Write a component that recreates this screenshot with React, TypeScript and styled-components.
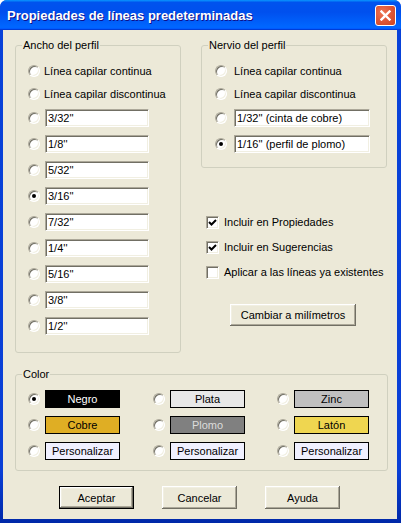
import React from 'react';
import styled, { createGlobalStyle } from 'styled-components';

const Global = createGlobalStyle`
  html, body { margin: 0; padding: 0; background: #ffffff; }
  body { font-family: "Liberation Sans", Arial, sans-serif; font-size: 11px; color: #000; }
`;

const Window = styled.div`
  width: 401px;
  height: 523px;
  box-sizing: border-box;
  display: flex;
  flex-direction: column;
  background: linear-gradient(to bottom, #0842d9 0%, #0a3fd6 90%, #0028a8 100%);
  border-radius: 7px 7px 0 0;
  overflow: hidden;
`;

const TitleBar = styled.div`
  height: 30px;
  flex: none;
  display: flex;
  align-items: center;
  justify-content: space-between;
  padding: 1px 5px 0 7px;
  box-sizing: border-box;
  background: linear-gradient(180deg, #0997ff, #0053ee 8%, #0050ee 40%, #0066ff 88%, #0066ff 93%, #005bff 95%, #003dd7 96%, #003dd7);
`;

const Title = styled.span`
  color: #fff;
  font: bold 13px "Liberation Sans", Arial, sans-serif;
  text-shadow: 1px 1px 0 #0f1089;
  white-space: nowrap;
`;

const CloseButton = styled.div`
  width: 21px;
  height: 21px;
  box-sizing: border-box;
  border: 1px solid #ffffff;
  border-radius: 3px;
  background: radial-gradient(circle at 35% 35%, #ee7755 0%, #e0593a 45%, #cc4420 100%);
  display: flex;
  align-items: center;
  justify-content: center;
`;

const Body = styled.div`
  flex: 1;
  margin: 0 4px 4px 3px;
  background: #ece9d8;
  padding: 15px 0 0 12px;
  display: flex;
  flex-direction: column;
`;

const TopSection = styled.div`
  display: flex;
  gap: 20px;
`;

const Group = styled.div<{ $w: number; $h: number; $pl: number; $pt: number }>`
  position: relative;
  box-sizing: border-box;
  width: ${p => p.$w}px;
  height: ${p => p.$h}px;
  border: 1px solid #d0d0bf;
  border-radius: 3px;
  padding: ${p => p.$pt}px 0 0 ${p => p.$pl}px;
`;

const Legend = styled.span`
  position: absolute;
  top: -7px;
  left: 6px;
  padding: 0 1px;
  line-height: 13px;
  background: #ece9d8;
`;

const OptionList = styled.div`
  display: flex;
  flex-direction: column;
`;

const OptionRow = styled.div<{ $mt: number; $gap: number }>`
  display: flex;
  align-items: center;
  height: 18px;
  margin-top: ${p => p.$mt}px;
  gap: ${p => p.$gap}px;
`;

const Radio = styled.span<{ $on?: boolean }>`
  position: relative;
  flex: none;
  width: 12px;
  height: 12px;
  box-sizing: border-box;
  border-radius: 50%;
  background: #fff;
  border: 1px solid;
  border-color: #aca899 #ffffff #ffffff #aca899;
  box-shadow: inset 1px 1px 0 #716f64, inset -1px -1px 0 #f1efe2;
  &::after {
    content: '';
    display: ${p => (p.$on ? 'block' : 'none')};
    position: absolute;
    left: 3px;
    top: 3px;
    width: 4px;
    height: 4px;
    border-radius: 50%;
    background: #000;
  }
`;

const TextBox = styled.div<{ $w: number }>`
  width: ${p => p.$w}px;
  height: 18px;
  box-sizing: border-box;
  background: #fff;
  border: 1px solid;
  border-color: #aca899 #ffffff #ffffff #aca899;
  box-shadow: inset 1px 1px 0 #716f64, inset -1px -1px 0 #f1efe2;
  padding: 0 2px;
  line-height: 16px;
  white-space: nowrap;
`;

const Label = styled.span`
  white-space: nowrap;
`;

const RightColumn = styled.div`
  width: 186px;
  display: flex;
  flex-direction: column;
`;

const CheckList = styled.div`
  display: flex;
  flex-direction: column;
  gap: 9px;
  margin: 46px 0 0 5px;
`;

const CheckRow = styled.div`
  display: flex;
  align-items: center;
  gap: 5px;
  height: 16px;
`;

const CheckBox = styled.span`
  flex: none;
  width: 13px;
  height: 13px;
  box-sizing: border-box;
  background: #fff;
  border: 1px solid;
  border-color: #aca899 #ffffff #ffffff #aca899;
  box-shadow: inset 1px 1px 0 #716f64, inset -1px -1px 0 #f1efe2;
  display: flex;
  align-items: center;
  justify-content: center;
`;

const Button = styled.button<{ $w?: number; $default?: boolean }>`
  width: ${p => p.$w ?? 75}px;
  height: ${p => (p.$default ? 23 : 23)}px;
  padding: 0;
  box-sizing: border-box;
  font: 11px "Liberation Sans", Arial, sans-serif;
  color: #000;
  background: #ece9d8;
  border: ${p => (p.$default ? '1px solid #000' : 'none')};
  box-shadow: inset -1px -1px 0 #716f64, inset 1px 1px 0 #ffffff, inset -2px -2px 0 #aca899, inset 2px 2px 0 #f1efe2;
`;

const MmButton = styled(Button)`
  margin: 24px 0 0 29px;
  height: 22px;
`;

const ColorGroupWrap = styled.div`
  margin-top: 21px;
`;

const ColorGrid = styled.div`
  display: grid;
  grid-template-columns: 125px 124px 1fr;
  row-gap: 8px;
`;

const ColorCell = styled.div`
  display: flex;
  align-items: center;
  gap: 5px;
  height: 18px;
`;

const Swatch = styled.div<{ $bg: string; $fg: string }>`
  width: 75px;
  height: 18px;
  box-sizing: border-box;
  border: 1px solid #000;
  background: ${p => p.$bg};
  color: ${p => p.$fg};
  display: flex;
  align-items: center;
  justify-content: center;
  white-space: nowrap;
`;

const ButtonRow = styled.div`
  display: flex;
  gap: 28px;
  margin: 15px 0 0 44px;
`;

const widths = ["3/32''", "1/8''", "5/32''", "3/16''", "7/32''", "1/4''", "5/16''", "3/8''", "1/2''"];

const colors = [
  { name: 'Negro', bg: '#000000', fg: '#ffffff', on: true },
  { name: 'Plata', bg: '#e8e8e8', fg: '#000000' },
  { name: 'Zinc', bg: '#c0c0c0', fg: '#000000' },
  { name: 'Cobre', bg: '#dfae24', fg: '#000000' },
  { name: 'Plomo', bg: '#808080', fg: '#dcdcdc' },
  { name: 'Latón', bg: '#efd650', fg: '#000000' },
  { name: 'Personalizar', bg: '#f0f0ff', fg: '#000000' },
  { name: 'Personalizar', bg: '#f0f0ff', fg: '#000000' },
  { name: 'Personalizar', bg: '#f0f0ff', fg: '#000000' },
];

const Check = () => (
  <svg width="9" height="9" viewBox="0 0 9 9">
    <path d="M1 4 L3.5 6.5 L8 2" stroke="#000" strokeWidth="2" fill="none" />
  </svg>
);

const CloseIcon = () => (
  <svg width="11" height="11" viewBox="0 0 11 11">
    <path d="M1.5 1.5 L9.5 9.5 M9.5 1.5 L1.5 9.5" stroke="#fff" strokeWidth="2.4" strokeLinecap="square" />
  </svg>
);

export default function App() {
  return (
    <>
      <Global />
      <Window>
        <TitleBar>
          <Title>Propiedades de líneas predeterminadas</Title>
          <CloseButton>
            <CloseIcon />
          </CloseButton>
        </TitleBar>
        <Body>
          <TopSection>
            <Group $w={166} $h={308} $pl={12} $pt={16}>
              <Legend>Ancho del perfil</Legend>
              <OptionList>
                <OptionRow $mt={0} $gap={4}>
                  <Radio />
                  <Label>Línea capilar continua</Label>
                </OptionRow>
                <OptionRow $mt={5} $gap={4}>
                  <Radio />
                  <Label>Línea capilar discontinua</Label>
                </OptionRow>
                {widths.map((w, i) => (
                  <OptionRow key={w} $mt={i === 0 ? 6 : 8} $gap={5}>
                    <Radio $on={w === "3/16''"} />
                    <TextBox $w={104}>{w}</TextBox>
                  </OptionRow>
                ))}
              </OptionList>
            </Group>
            <RightColumn>
              <Group $w={186} $h={123} $pl={13} $pt={16}>
                <Legend>Nervio del perfil</Legend>
                <OptionList>
                  <OptionRow $mt={0} $gap={7}>
                    <Radio />
                    <Label>Línea capilar continua</Label>
                  </OptionRow>
                  <OptionRow $mt={5} $gap={7}>
                    <Radio />
                    <Label>Línea capilar discontinua</Label>
                  </OptionRow>
                  <OptionRow $mt={6} $gap={7}>
                    <Radio />
                    <TextBox $w={136}>1/32'' (cinta de cobre)</TextBox>
                  </OptionRow>
                  <OptionRow $mt={8} $gap={7}>
                    <Radio $on />
                    <TextBox $w={136}>1/16'' (perfil de plomo)</TextBox>
                  </OptionRow>
                </OptionList>
              </Group>
              <CheckList>
                <CheckRow>
                  <CheckBox><Check /></CheckBox>
                  <Label>Incluir en Propiedades</Label>
                </CheckRow>
                <CheckRow>
                  <CheckBox><Check /></CheckBox>
                  <Label>Incluir en Sugerencias</Label>
                </CheckRow>
                <CheckRow>
                  <CheckBox />
                  <Label>Aplicar a las líneas ya existentes</Label>
                </CheckRow>
              </CheckList>
              <MmButton $w={126}>Cambiar a milímetros</MmButton>
            </RightColumn>
          </TopSection>
          <ColorGroupWrap>
            <Group $w={373} $h={97} $pl={12} $pt={15}>
              <Legend>Color</Legend>
              <ColorGrid>
                {colors.map((c, i) => (
                  <ColorCell key={i}>
                    <Radio $on={c.on} />
                    <Swatch $bg={c.bg} $fg={c.fg}>{c.name}</Swatch>
                  </ColorCell>
                ))}
              </ColorGrid>
            </Group>
          </ColorGroupWrap>
          <ButtonRow>
            <Button $default>Aceptar</Button>
            <Button>Cancelar</Button>
            <Button>Ayuda</Button>
          </ButtonRow>
        </Body>
      </Window>
    </>
  );
}
